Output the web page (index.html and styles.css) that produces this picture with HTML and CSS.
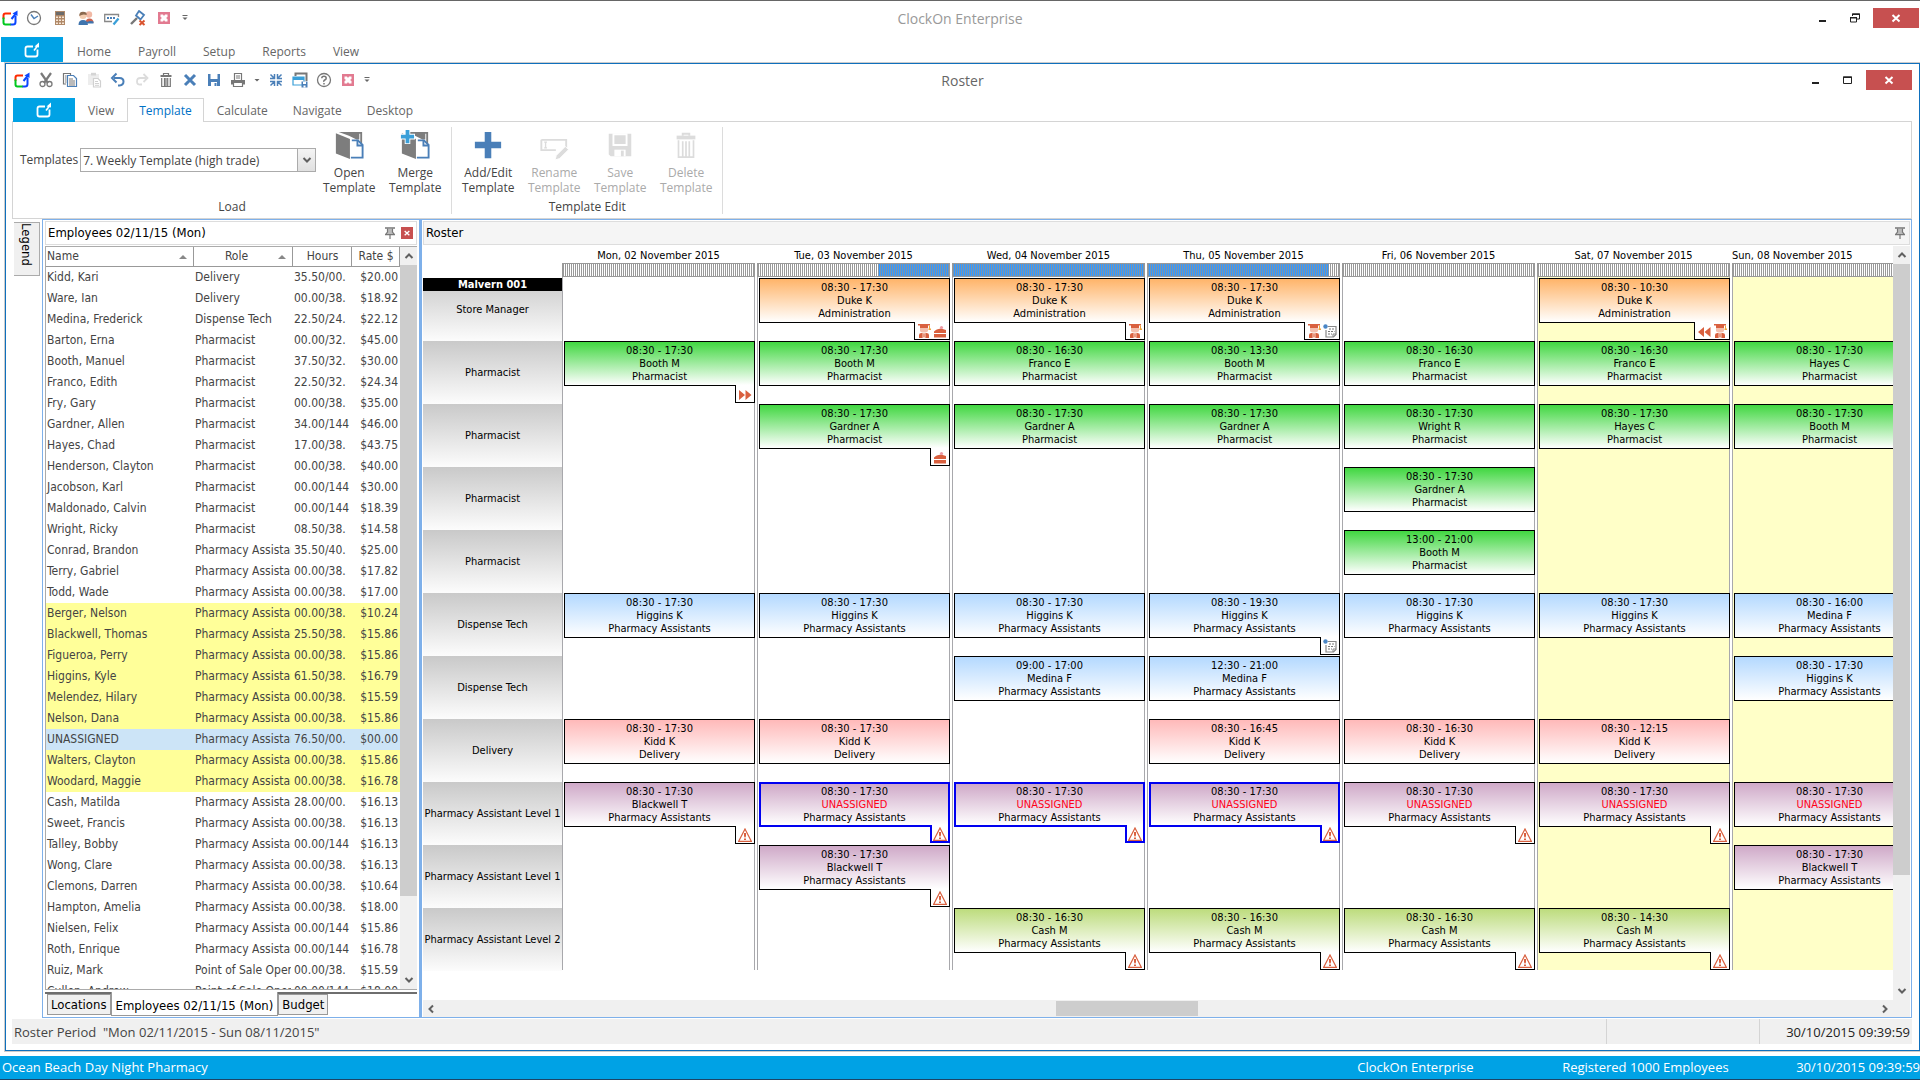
FILE: index.html
```
<!DOCTYPE html>
<html lang="en">
<head>
    <meta charset="UTF-8">
    <meta name="viewport" content="width=device-width, initial-scale=1.0">
    <title>ClockOn Enterprise</title>
    <link rel="stylesheet" href="styles.css">
</head>
<body>
    <!-- Icon set -->
    <svg class="icon-defs" aria-hidden="true">
        <symbol id="i-logo" viewBox="0 0 16 16">
            <path d="M1.5 9V5.5Q1.5 3.5 3.5 3.500H9" fill="none" stroke="#ff2a00" stroke-width="2"/>
            <path d="M1.500 7.500V12.500Q1.500 14.500 3.500 14.500H9" fill="none" stroke="#00c81e" stroke-width="2"/>
            <path d="M8.500 14.500H11Q13.500 14.500 13.500 12V6" fill="none" stroke="#0a46ff" stroke-width="2"/>
            <path d="M9.500 9 14 3.500" stroke="#0a46ff" stroke-width="2"/>
            <path d="M10.500 3.500 15.500 .5V6Z" fill="#0a46ff"/>
        </symbol>
        <symbol id="i-mark" viewBox="0 0 16 16">
            <path d="M9 4.500H3.500Q1.500 4.500 1.500 6.500V12.500Q1.500 14.500 3.500 14.500H11.500Q13.500 14.500 13.500 12.500V7.500" fill="none" stroke="#fff" stroke-width="1.800"/>
            <path d="M10 8.500 13.500 4" stroke="#fff" stroke-width="1.600"/>
            <path d="M10.500 4.500 15 .5V5.500Z" fill="#fff"/>
        </symbol>
        <symbol id="i-clock" viewBox="0 0 16 16">
            <circle cx="8" cy="8" r="6.500" fill="#fff" stroke="#777" stroke-width="1.300"/>
            <path d="M5 4.500 8 8.500 12 6" fill="none" stroke="#4a7fb8" stroke-width="1.400"/>
        </symbol>
        <symbol id="i-calc" viewBox="0 0 16 16">
            <path d="M3 1H13V15H3Z" fill="#b08968"/>
            <path d="M4 2H12V5H4Z" fill="#6b6b6b"/>
            <path d="M4 6.500H6V8H4ZM7 6.500H9V8H7ZM10 6.500H12V8H10ZM4 9.500H6V11H4ZM7 9.500H9V11H7ZM10 9.500H12V11H10ZM4 12.500H6V14H4ZM7 12.500H9V14H7ZM10 12.500H12V14H10Z" fill="#f6e6d6"/>
        </symbol>
        <symbol id="i-people" viewBox="0 0 16 16">
            <circle cx="11" cy="4.500" r="3.200" fill="#f1b9a5"/>
            <path d="M7.500 13Q7.500 8.500 11.500 8.500T15.500 13Z" fill="#c9614d"/>
            <circle cx="5" cy="5.500" r="3.500" fill="#f3cdb0"/>
            <path d="M1.300 6Q1 1.700 5 1.700T8.700 5Q5 3.500 1.300 6Z" fill="#8b6a4f"/>
            <path d="M.5 15Q.5 10 5 10T10 15Z" fill="#3f74ad"/>
            <path d="M9 13.500H15.500V11.500Q12 10.500 9 12Z" fill="#3f74ad"/>
        </symbol>
        <symbol id="i-card" viewBox="0 0 16 16">
            <path d="M14.500 7V4.500H.7V11.500H8" fill="none" stroke="#888" stroke-width="1.300"/>
            <path d="M3 7H5V9H3ZM6 7H8V9H6ZM9 7H11V9H9Z" fill="#4a7fb8"/>
            <path d="M9.500 14.500 14.500 8.500" stroke="#3a9fd8" stroke-width="2.200"/>
        </symbol>
        <symbol id="i-plug" viewBox="0 0 16 16">
            <path d="M1 14 7 8" stroke="#777" stroke-width="2.400"/>
            <path d="M9 1 14 5 10.500 9.500 6 5.500Z" fill="none" stroke="#4a7fb8" stroke-width="1.800"/>
            <path d="M9.500 10.500 14.500 15M14.500 10.500 9.500 15" stroke="#d9532f" stroke-width="2"/>
        </symbol>
        <symbol id="i-exit" viewBox="0 0 16 16">
            <path d="M2 2H14V14H2Z" fill="#e27a90"/>
            <path d="M4.500 4.500H7L8 6 9 4.500H11.500V7L10 8 11.500 9V11.500H9L8 10 7 11.500H4.500V9L6 8 4.500 7Z" fill="#fff"/>
        </symbol>
        <symbol id="i-cut" viewBox="0 0 16 16">
            <path d="M3 1 10 11M13 1 6 11" stroke="#7a7a7a" stroke-width="2.200"/>
            <circle cx="4.500" cy="12" r="2.500" fill="none" stroke="#7a7a7a" stroke-width="1.300"/>
            <circle cx="11.500" cy="12" r="2.500" fill="none" stroke="#7a7a7a" stroke-width="1.300"/>
        </symbol>
        <symbol id="i-copy" viewBox="0 0 16 16">
            <path d="M4 12H1.500V1.500H8.500V3" fill="none" stroke="#777" stroke-width="1.200"/>
            <path d="M5.500 3.500H11.500L14.500 6.500V14.500H5.500Z" fill="#fff" stroke="#4a7fb8" stroke-width="1.200"/>
            <path d="M7 7H11M7 9H13M7 11H13M7 13H13M3 4H4.500M3 6H4.500M3 8H4.500M3 10H4.500" stroke="#777"/>
        </symbol>
        <symbol id="i-paste" viewBox="0 0 16 16">
            <path d="M2 2H13V13H2Z" fill="#ededed"/>
            <path d="M5 .8H10V3.500H5Z" fill="#d5d5d5"/>
            <path d="M7.500 6.500H12L14.500 9V15H7.500Z" fill="#fff" stroke="#d0d0d0" stroke-width="1.200"/>
            <path d="M9 9.500H12M9 11.500H13M9 13.300H13" stroke="#d0d0d0"/>
        </symbol>
        <symbol id="i-undo" viewBox="0 0 16 16">
            <path d="M4 6H9.500Q13.500 6 13.500 9.500T9.500 13.500H8" fill="none" stroke="#4a7fb8" stroke-width="2"/>
            <path d="M6.500 1.500 2 6 6.500 10.500" fill="none" stroke="#4a7fb8" stroke-width="2"/>
        </symbol>
        <symbol id="i-redo" viewBox="0 0 16 16">
            <path d="M12 6H6.500Q3 6 3 9.500T6.500 12.500H8" fill="none" stroke="#dcdcdc" stroke-width="1.800"/>
            <path d="M9.500 2 13.500 6 9.500 10" fill="none" stroke="#dcdcdc" stroke-width="1.800"/>
        </symbol>
        <symbol id="i-trash" viewBox="0 0 16 16">
            <path d="M5.500 3V1.500H10.500V3" fill="none" stroke="#777" stroke-width="1.200"/>
            <path d="M2.500 3H13.500V5H2.500Z" fill="#777"/>
            <path d="M3.700 6V14.500H12.300V6M6.500 6V14M8 6V14M9.700 6V14" fill="none" stroke="#777" stroke-width="1.200"/>
        </symbol>
        <symbol id="i-delete" viewBox="0 0 16 16">
            <path d="M3 3 13 13M13 3 3 13" stroke="#4a7fb8" stroke-width="3"/>
        </symbol>
        <symbol id="i-save" viewBox="0 0 16 16">
            <path d="M2 2H14V14H2Z" fill="#4a7fb8"/>
            <path d="M4.500 2H11.500V7H4.500ZM5 10H11V14H5Z" fill="#fff"/>
            <path d="M8.500 11H10.500V14H8.500Z" fill="#4a7fb8"/>
        </symbol>
        <symbol id="i-print" viewBox="0 0 16 16">
            <path d="M4.500 8V1.500H11.500V8" fill="#fff" stroke="#777" stroke-width="1.200"/>
            <path d="M6 4H10M6 6H10" stroke="#777"/>
            <path d="M1 8H15V12.500H1Z" fill="#777"/>
            <path d="M3.500 10.500H12.500V14.500H3.500Z" fill="#fff" stroke="#777" stroke-width="1.200"/>
        </symbol>
        <symbol id="i-shrink" viewBox="0 0 16 16">
            <path d="M6.500 2V6.500H2M9.500 2V6.500H14M6.500 14V9.500H2M9.500 14V9.500H14M6.500 6.500 2.500 2.500M9.500 6.500 13.500 2.500M6.500 9.500 2.500 13.500M9.500 9.500 13.500 13.500" fill="none" stroke="#4a7fb8" stroke-width="1.500"/>
        </symbol>
        <symbol id="i-window" viewBox="0 0 16 16">
            <path d="M3.500 4V1.500H14.500V9" fill="none" stroke="#777" stroke-width="2"/>
            <path d="M1 5H12V13H1Z" fill="#fff" stroke="#3a9fd8" stroke-width="1.200"/>
            <path d="M1 5H12V8H1Z" fill="#3a9fd8"/>
            <path d="M9.500 9.500H15.500V15.500H9.500Z" fill="#4a7fb8"/>
            <path d="M11 9.500H14V12H11ZM11.500 13.500H13.500V15.500H11.500Z" fill="#fff"/>
        </symbol>
        <symbol id="i-help" viewBox="0 0 16 16">
            <circle cx="8" cy="8" r="6.500" fill="#fff" stroke="#777" stroke-width="1.300"/>
            <path d="M5.800 6.300Q5.800 4.200 8 4.200T10.200 6.200Q10.200 7.300 8.800 8T8 9.800M8 11V12.500" fill="none" stroke="#777" stroke-width="1.500"/>
        </symbol>
        <symbol id="i-more" viewBox="0 0 8 8">
            <path d="M1.500 1.500H6.500" stroke="#666"/>
            <path d="M1.500 3.500H6.500L4 6Z" fill="#666"/>
        </symbol>
        <symbol id="i-caret" viewBox="0 0 8 8">
            <path d="M1.500 3H6.500L4 5.500Z" fill="#666"/>
        </symbol>
        <symbol id="i-open" viewBox="0 0 32 32">
            <path d="M5 2H30V15H28V4H27V10H24L16 6Z" fill="#7d7d7d"/>
            <path d="M2 3.500 17 9.500V31L2 25Z" fill="#7d7d7d"/>
            <path d="M19 11H25.500L30.500 16V29.500H18" fill="#fff" stroke="#4a7fb8" stroke-width="2"/>
            <path d="M25 11V16.500H30.500" fill="none" stroke="#4a7fb8" stroke-width="2"/>
        </symbol>
        <symbol id="i-merge" viewBox="0 0 32 32">
            <use href="#i-open"/>
            <path d="M5-1H11V4H16V10H11V15H5V10H0V4H5Z" fill="#fff"/>
            <path d="M6 0H10V5H15V9H10V14H6V9H1V5H6Z" fill="#3a9fd8"/>
        </symbol>
        <symbol id="i-plus" viewBox="0 0 32 32">
            <path d="M12.500 2H19.500V12.500H30V19.500H19.500V30H12.500V19.500H2V12.500H12.500Z" fill="#4a7fb8"/>
        </symbol>
        <symbol id="i-rename" viewBox="0 0 32 32">
            <path d="M2.500 10.500H29V21M18 21.500H2.500V10.500" fill="none" stroke="#dcdcdc" stroke-width="2"/>
            <path d="M5.500 13H8.500M5.500 19H8.500M7 13V19" stroke="#dcdcdc" stroke-width="1.400"/>
            <path d="M17 32 18.500 27 28 17.500 31.500 21 22 30.500Z" fill="#dcdcdc" stroke="#fff"/>
        </symbol>
        <symbol id="i-disk" viewBox="0 0 32 32">
            <path d="M4 4H28V28H6L4 26Z" fill="#dcdcdc"/>
            <path d="M9 4.500H23V16H9Z" fill="#dcdcdc" stroke="#fff" stroke-width="2"/>
            <path d="M10 21H22V28H10Z" fill="#fff"/>
            <path d="M17 22H20V28H17Z" fill="#dcdcdc"/>
        </symbol>
        <symbol id="i-bin" viewBox="0 0 32 32">
            <path d="M12.500 6V4H19.500V6" fill="none" stroke="#dcdcdc" stroke-width="2"/>
            <path d="M6 6H26V10H6Z" fill="#dcdcdc"/>
            <path d="M8 11V29H24V11M12.500 12V28M16 12V28M19.500 12V28" fill="none" stroke="#dcdcdc" stroke-width="1.800"/>
        </symbol>
        <symbol id="i-pin" viewBox="0 0 12 12">
            <path d="M1 1H11M1 7.500H11" stroke="#777" stroke-width="1.400"/>
            <path d="M3 2H9V5L10 7H2L3 5Z" fill="#bbb"/>
            <path d="M3.500 1.500V5L2 7M8.500 1.500V5L10 7M6 7.500V12" fill="none" stroke="#777" stroke-width="1.200"/>
        </symbol>
        <symbol id="i-up" viewBox="0 0 10 10">
            <path d="M1.500 7 5 3.500 8.500 7" fill="none" stroke="#606060" stroke-width="2"/>
        </symbol>
        <symbol id="i-down" viewBox="0 0 10 10">
            <path d="M1.500 3 5 6.500 8.500 3" fill="none" stroke="#606060" stroke-width="2"/>
        </symbol>
        <symbol id="i-left" viewBox="0 0 10 10">
            <path d="M7 1.500 3.500 5 7 8.500" fill="none" stroke="#606060" stroke-width="2"/>
        </symbol>
        <symbol id="i-right" viewBox="0 0 10 10">
            <path d="M3 1.500 6.500 5 3 8.500" fill="none" stroke="#606060" stroke-width="2"/>
        </symbol>
        <symbol id="i-min" viewBox="0 0 12 12"><path d="M2 8H9V10H2Z" fill="#222"/></symbol>
        <symbol id="i-max" viewBox="0 0 12 12">
            <path d="M1.500 3H9.500V9.500H1.500Z" fill="none" stroke="#222"/>
            <path d="M1 2.500H10V4H1Z" fill="#222"/>
        </symbol>
        <symbol id="i-restore" viewBox="0 0 12 12">
            <path d="M3.500 4V2H10.500V7H8" fill="none" stroke="#222"/>
            <path d="M1.500 5.500H7.500V10H1.500Z" fill="#fff" stroke="#222"/>
            <path d="M3 1.500H11V3H3ZM1 5H8V6.500H1Z" fill="#222"/>
        </symbol>
        <symbol id="i-close" viewBox="0 0 12 12">
            <path d="M2.500 3 9.500 9.500M9.500 3 2.500 9.500" stroke="#fff" stroke-width="2"/>
        </symbol>
        <symbol id="i-grad" viewBox="0 0 14 14">
            <path d="M1 0H13V1.500H11V4H3V1.500H1Z" fill="#d9603f"/>
            <path d="M3 4H11V6.500Q11 8.500 7 8.500T3 6.500Z" fill="#f3bfae"/>
            <path d="M12 1.500H13V4.500H14V6H11.500V4.500H12Z" fill="#f0a63c"/>
            <path d="M2 14V11Q2 9 4.500 9H9.500Q12 9 12 11V14Z" fill="#d9603f"/>
            <path d="M5.500 9H8.500V14H5.500Z" fill="#f6d3c6"/>
            <path d="M6.500 9.500H7.500V13H6.500Z" fill="#d9603f"/>
        </symbol>
        <symbol id="i-cake" viewBox="0 0 14 14">
            <path d="M1 7.500Q3 5 8 4.500L13 6V9H1Z" fill="#d9603f"/>
            <circle cx="8.500" cy="3.500" r="1.600" fill="#eb9aa6"/>
            <path d="M1 10H13V13.500H1Z" fill="#d9603f"/>
        </symbol>
        <symbol id="i-note" viewBox="0 0 14 14">
            <path d="M5 2.500H13V10.500L10.500 13H3V6" fill="#fff" stroke="#888" stroke-width="1.200"/>
            <path d="M6 5H11.500M5 7.500H11.500M5 10H9" stroke="#777" stroke-dasharray="2 1"/>
            <path d="M10 13V10H13" fill="none" stroke="#888"/>
            <circle cx="2.500" cy="2.500" r="2.200" fill="#4a86c5"/>
        </symbol>
        <symbol id="i-warn" viewBox="0 0 14 14">
            <path d="M7 1 13.300 13.300H.7Z" fill="#fff" stroke="#d9603f" stroke-width="1.200"/>
            <path d="M6 5H8V8L7.500 9.500H6.500L6 8ZM6 10.500H8V12H6Z" fill="#d9603f"/>
        </symbol>
        <symbol id="i-next" viewBox="0 0 14 14">
            <path d="M1 3 7 8 1 13ZM7.500 3 13.500 8 7.500 13Z" fill="#d9603f"/>
        </symbol>
        <symbol id="i-prev" viewBox="0 0 14 14">
            <path d="M7 3 1 8 7 13ZM13.500 3 7.500 8 13.500 13Z" fill="#d9603f"/>
        </symbol>
    </svg>

    <div class="app">
        <!-- Main window -->
        <header class="titlebar">
            <div class="quick quick-main">
                <button aria-label="ClockOn"><svg><use href="#i-logo"/></svg></button>
                <button aria-label="Clock"><svg><use href="#i-clock"/></svg></button>
                <button aria-label="Calculator"><svg><use href="#i-calc"/></svg></button>
                <button aria-label="Employees"><svg><use href="#i-people"/></svg></button>
                <button aria-label="Timecards"><svg><use href="#i-card"/></svg></button>
                <button aria-label="Disconnect"><svg><use href="#i-plug"/></svg></button>
                <button aria-label="Exit"><svg><use href="#i-exit"/></svg></button>
                <button class="tiny" aria-label="Customise"><svg><use href="#i-more"/></svg></button>
            </div>
            <h1 class="title muted">ClockOn Enterprise</h1>
            <div class="window-buttons">
                <button aria-label="Minimise"><svg><use href="#i-min"/></svg></button>
                <button aria-label="Restore"><svg><use href="#i-restore"/></svg></button>
                <button class="close" aria-label="Close"><svg><use href="#i-close"/></svg></button>
            </div>
        </header>
        <nav class="tabs tabs-main">
            <button class="file-tab" aria-label="Application menu"><svg><use href="#i-mark"/></svg></button>
            <button class="tab">Home</button>
            <button class="tab">Payroll</button>
            <button class="tab">Setup</button>
            <button class="tab">Reports</button>
            <button class="tab">View</button>
        </nav>

        <!-- Roster window -->
        <main class="window">
            <div class="titlebar titlebar-inner">
                <div class="quick">
                    <button aria-label="ClockOn"><svg><use href="#i-logo"/></svg></button>
                    <button aria-label="Cut"><svg><use href="#i-cut"/></svg></button>
                    <button aria-label="Copy"><svg><use href="#i-copy"/></svg></button>
                    <button aria-label="Paste"><svg><use href="#i-paste"/></svg></button>
                    <button aria-label="Undo"><svg><use href="#i-undo"/></svg></button>
                    <button aria-label="Redo"><svg><use href="#i-redo"/></svg></button>
                    <button aria-label="Clear"><svg><use href="#i-trash"/></svg></button>
                    <button aria-label="Delete"><svg><use href="#i-delete"/></svg></button>
                    <button aria-label="Save"><svg><use href="#i-save"/></svg></button>
                    <button aria-label="Print"><svg><use href="#i-print"/></svg></button>
                    <button class="tiny" aria-label="Print options"><svg><use href="#i-caret"/></svg></button>
                    <button aria-label="Fit"><svg><use href="#i-shrink"/></svg></button>
                    <button aria-label="Save layout"><svg><use href="#i-window"/></svg></button>
                    <button aria-label="Help"><svg><use href="#i-help"/></svg></button>
                    <button aria-label="Exit"><svg><use href="#i-exit"/></svg></button>
                    <button class="tiny" aria-label="Customise"><svg><use href="#i-more"/></svg></button>
                </div>
                <h2 class="title">Roster</h2>
                <div class="window-buttons">
                    <button aria-label="Minimise"><svg><use href="#i-min"/></svg></button>
                    <button aria-label="Maximise"><svg><use href="#i-max"/></svg></button>
                    <button class="close" aria-label="Close"><svg><use href="#i-close"/></svg></button>
                </div>
            </div>
            <nav class="tabs tabs-inner">
                <button class="file-tab" aria-label="Roster menu"><svg><use href="#i-mark"/></svg></button>
                <button class="tab">View</button>
                <button class="tab active">Template</button>
                <button class="tab">Calculate</button>
                <button class="tab">Navigate</button>
                <button class="tab">Desktop</button>
            </nav>

            <!-- Ribbon -->
            <section class="ribbon">
                <div class="group">
                    <div class="group-body">
                        <label for="template">Templates</label>
                        <div class="combo">
                            <select id="template">
                                <option>7. Weekly Template (high trade)</option>
                            </select>
                            <span class="combo-arrow"><svg><use href="#i-down"/></svg></span>
                        </div>
                        <button class="big"><svg><use href="#i-open"/></svg>Open<br>Template</button>
                        <button class="big"><svg><use href="#i-merge"/></svg>Merge<br>Template</button>
                    </div>
                    <div class="group-name">Load</div>
                </div>
                <div class="group">
                    <div class="group-body">
                        <button class="big"><svg><use href="#i-plus"/></svg>Add/Edit<br>Template</button>
                        <button class="big" disabled><svg><use href="#i-rename"/></svg>Rename<br>Template</button>
                        <button class="big" disabled><svg><use href="#i-disk"/></svg>Save<br>Template</button>
                        <button class="big" disabled><svg><use href="#i-bin"/></svg>Delete<br>Template</button>
                    </div>
                    <div class="group-name">Template Edit</div>
                </div>
            </section>

            <div class="dock">
                <div class="dock-side">
                    <button class="legend">Legend</button>
                </div>

                <!-- Employees -->
                <section class="panel employees">
                    <div class="panel-title">
                        <h3>Employees 02/11/15 (Mon)</h3>
                        <button class="pin" aria-label="Pin"><svg><use href="#i-pin"/></svg></button>
                        <button class="panel-close" aria-label="Close panel"><svg><use href="#i-close"/></svg></button>
                    </div>
                    <div class="list">
                        <div class="list-view">
                            <table>
                                <thead>
                                    <tr>
                                        <th class="col-name sorted">Name</th>
                                        <th class="col-role sorted">Role</th>
                                        <th class="col-hours">Hours</th>
                                        <th class="col-rate">Rate $</th>
                                    </tr>
                                </thead>
                                <tbody id="employees"></tbody>
                            </table>
                        </div>
                        <div class="scroll-v">
                            <svg><use href="#i-up"/></svg>
                            <div class="thumb"></div>
                            <svg><use href="#i-down"/></svg>
                        </div>
                    </div>
                    <div class="panel-tabs">
                        <button>Locations</button>
                        <button class="active">Employees 02/11/15 (Mon)</button>
                        <button>Budget</button>
                    </div>
                </section>

                <!-- Roster grid -->
                <section class="panel roster">
                    <div class="panel-title">
                        <h3>Roster</h3>
                        <button class="pin" aria-label="Pin"><svg><use href="#i-pin"/></svg></button>
                    </div>
                    <div class="roster-body">
                        <div class="roster-view">
                            <div class="roles" id="roles"></div>
                            <div class="days" id="days"></div>
                        </div>
                        <div class="scroll-v">
                            <svg><use href="#i-up"/></svg>
                            <div class="thumb"></div>
                            <svg><use href="#i-down"/></svg>
                        </div>
                    </div>
                    <div class="scroll-h">
                        <svg><use href="#i-left"/></svg>
                        <div class="track"><div class="thumb"></div></div>
                        <svg><use href="#i-right"/></svg>
                    </div>
                </section>
            </div>

            <div class="status">
                <span class="status-period">Roster Period&nbsp; "Mon 02/11/2015 - Sun 08/11/2015"</span>
                <span class="status-cell"></span>
                <span class="status-cell status-time">30/10/2015 09:39:59</span>
            </div>
        </main>

        <footer class="footer">
            <span class="footer-site">Ocean Beach Day Night Pharmacy</span>
            <span class="footer-app">ClockOn Enterprise</span>
            <span class="footer-licence">Registered 1000 Employees</span>
            <span class="footer-time">30/10/2015 09:39:59</span>
        </footer>
    </div>

    <script src="app.js"></script>
</body>
</html>
```

FILE: styles.css
```
* {
    margin: 0;
    padding: 0;
    box-sizing: border-box;
}

body {
    font-family: "Open Sans", "Noto Sans", sans-serif;
    font-size: 12px;
    line-height: 15px;
    color: #444;
    background: white;
}

button {
    font: inherit;
    color: inherit;
    background: none;
    border: none;
}

h1, h2, h3 {
    font-weight: normal;
}

.icon-defs {
    position: absolute;
    width: 0;
    height: 0;
}

.app {
    display: flex;
    flex-direction: column;
    height: 100vh;
    overflow: hidden;
    border-top: 1px solid #666;
}

/* Title bars */
.titlebar {
    display: grid;
    grid-template-columns: 1fr auto 1fr;
    flex: none;
    align-items: center;
    height: 36px;
    padding-bottom: 2px;
}

.titlebar-inner {
    height: 34px;
}

.titlebar .title {
    font-size: 14px;
    color: #666;
}

.titlebar .title.muted {
    color: #999;
}

.quick {
    display: flex;
    align-items: center;
    padding-left: 4px;
}

.quick button {
    display: flex;
    align-items: center;
    justify-content: center;
    width: 24px;
    height: 20px;
}

.quick svg {
    width: 16px;
    height: 16px;
}

.quick .tiny {
    width: 14px;
}

.quick .tiny svg {
    width: 8px;
    height: 8px;
}

.quick-main {
    gap: 2px;
    padding-left: 0;
}

.quick-main button:first-child {
    width: 20px;
}

.window-buttons {
    display: flex;
    justify-content: flex-end;
    padding-right: 1px;
}

.titlebar-inner .window-buttons {
    padding-right: 7px;
}

.window-buttons button {
    display: flex;
    align-items: center;
    justify-content: center;
    width: 32px;
    height: 20px;
}

.window-buttons svg {
    width: 12px;
    height: 12px;
}

.window-buttons .close {
    width: 46px;
    margin-left: 2px;
    background: #c75050;
}

/* Tabs */
.tabs {
    display: flex;
    flex: none;
    gap: 1px;
    height: 25px;
    padding-left: 1px;
}

.tabs-main {
    gap: 2px;
}

.tabs-main .tab {
    padding: 2px 12px 0 11px;
}

.tabs-inner {
    position: relative;
    z-index: 1;
    height: 24px;
    margin-bottom: -1px;
    padding-left: 7px;
}

.file-tab {
    width: 62px;
    background: #00a2e5;
}

.file-tab svg {
    width: 16px;
    height: 16px;
    vertical-align: middle;
}

.tab {
    padding: 0 11px;
    color: #666;
    border: 1px solid transparent;
    border-bottom: none;
}

.tab.active {
    color: #0072c6;
    background: white;
    border-color: #d4d4d4;
}

/* Roster window */
.window {
    display: flex;
    flex: 1;
    flex-direction: column;
    min-height: 0;
    margin: 1px 0 5px 5px;
    padding-bottom: 6px;
    border: 1px solid #0f70bd;
    outline: 1px solid #ccc;
}

.ribbon {
    display: flex;
    flex: none;
    height: 98px;
    margin: 0 7px 0 6px;
    padding: 5px 0 4px;
    border: 1px solid #d4d4d4;
}

.group {
    display: flex;
    flex-direction: column;
    border-right: 1px solid #dcdcdc;
}

.group-body {
    display: flex;
    flex: 1;
    align-items: flex-start;
    padding: 0 3px;
}

.group:first-child .group-body {
    padding: 0 3px 0 7px;
}

.group-body label {
    padding-top: 25px;
    padding-right: 2px;
}

.group-name {
    text-align: center;
    line-height: 14px;
}

.combo {
    display: flex;
    width: 236px;
    height: 24px;
    margin-top: 21px;
    border: 1px solid #ababab;
}

.combo select {
    flex: 1;
    min-width: 0;
    padding-left: 2px;
    font: inherit;
    color: inherit;
    background: white;
    border: none;
    appearance: none;
}

.combo-arrow {
    display: flex;
    align-items: center;
    justify-content: center;
    width: 18px;
    background: linear-gradient(#f4f4f4, #e0e0e0);
    border-left: 1px solid #ababab;
}

.combo-arrow svg {
    width: 10px;
    height: 10px;
}

.big {
    width: 66px;
    text-align: center;
}

.big svg {
    display: block;
    width: 30px;
    height: 30px;
    margin: 3px auto 5px;
    overflow: visible;
}

.big:disabled {
    color: #aaa;
}

/* Dock */
.dock {
    display: flex;
    flex: 1;
    min-height: 0;
    margin-right: 7px;
}

.dock-side {
    width: 36px;
    padding: 3px 2px 0 8px;
}

.legend {
    width: 26px;
    height: 54px;
    padding: 0 2px;
    font: 13px/22px "DejaVu Sans Condensed", "DejaVu Sans", sans-serif;
    color: black;
    background: #f0f0f0;
    border: 1px solid #ababab;
    border-left: none;
    text-align: left;
    writing-mode: vertical-rl;
}

.panel {
    display: flex;
    flex-direction: column;
    min-width: 0;
    padding: 1px 2px 0;
    border: 1px solid #7eb0ea;
}

.panel-title {
    display: flex;
    flex: none;
    align-items: center;
    height: 24px;
    padding: 0 3px 0 2px;
    color: black;
    border: 1px solid #ddd;
}

.panel-title h3 {
    flex: 1;
    font: 13px/16px "DejaVu Sans Condensed", "DejaVu Sans", sans-serif;
}

.pin svg {
    display: block;
    width: 12px;
    height: 12px;
}

.panel-close {
    display: flex;
    align-items: center;
    justify-content: center;
    width: 12px;
    height: 12px;
    margin-left: 5px;
    background: #c75050;
}

.panel-close svg {
    width: 8px;
    height: 8px;
}

.scroll-v {
    display: flex;
    flex: none;
    flex-direction: column;
    align-items: center;
    width: 17px;
    background: #f0f0f0;
}

.scroll-v svg,
.scroll-h svg {
    flex: none;
    width: 10px;
    height: 10px;
    margin: 4px 3px;
}

.scroll-v .thumb {
    width: 100%;
    height: 85%;
    margin-bottom: auto;
    background: #cdcdcd;
}

.roster .scroll-v .thumb {
    height: 81%;
}

/* Employees */
.employees {
    width: 378px;
}

.list {
    display: flex;
    flex: 1;
    min-height: 0;
    margin-top: 1px;
    border: 1px solid #ababab;
    border-right: none;
}

.list-view {
    flex: 1;
    overflow: hidden;
}

table {
    width: 100%;
    table-layout: fixed;
    border-spacing: 0;
    font: 12px/21px "DejaVu Sans Condensed", "DejaVu Sans", sans-serif;
}

th, td {
    height: 21px;
    padding: 0 0 0 1px;
    overflow: hidden;
    font-weight: normal;
    text-align: left;
    white-space: nowrap;
}

/* Transparent edge keeps clipped text away from the next column */
td {
    border-right: 2px solid transparent;
}

th {
    height: 20px;
    line-height: 19px;
    text-align: center;
    border-right: 1px solid #999;
    border-bottom: 1px solid #999;
}

.col-name {
    width: 148px;
    text-align: left;
}

.col-role {
    width: 99px;
}

.col-hours {
    width: 59px;
}

th.sorted::after {
    content: "";
    float: right;
    margin: 8px 6px 0 0;
    border: 4px solid transparent;
    border-top: none;
    border-bottom: 4px solid #888;
}

td:last-child {
    text-align: right;
}

tr.casual {
    background: #ffff99;
}

tr.selected {
    background: #cce4f7;
}

.panel-tabs {
    display: flex;
    flex: none;
    align-items: flex-start;
    height: 25px;
    margin-top: 2px;
    padding-left: 2px;
    font: 13px/18px "DejaVu Sans Condensed", "DejaVu Sans", sans-serif;
    color: black;
    border-top: 2px solid #6e6e6e;
}

.panel-tabs button {
    height: 21px;
    padding: 0 3px;
    background: #f0f0f0;
    border: 1px solid #999;
}

.panel-tabs .active {
    height: 24px;
    margin-top: -2px;
    padding: 4px 4px 0;
    background: white;
    border-top: none;
}

/* Roster grid */
.roster {
    flex: 1;
    padding: 1px 1px 0;
    border-left-width: 2px;
}

.roster .panel-title {
    background: #f5f5f5;
}

.roster-body {
    display: flex;
    flex: 1;
    min-height: 0;
    margin-top: 1px;
}

.roster-view {
    display: flex;
    flex: 1;
    overflow: hidden;
    font: 11px/13px "DejaVu Sans Condensed", "DejaVu Sans", sans-serif;
    color: black;
    text-align: center;
}

.roles {
    flex: none;
    width: 139px;
    padding-top: 32px;
}

.role {
    position: relative;
    display: flex;
    align-items: center;
    justify-content: center;
    height: 63px;
    white-space: nowrap;
    background: linear-gradient(#c9c9c9, #fcfcfc);
}

.location {
    position: absolute;
    top: 0;
    left: 0;
    width: 100%;
    font-weight: bold;
    color: white;
    background: black;
}

.days {
    display: flex;
    gap: 2px;
}

.day {
    flex: none;
    width: 193px;
}

.day-name {
    height: 17px;
    padding-top: 3px;
    white-space: nowrap;
}

.day:last-child .day-name {
    width: 119px;
}

.hours {
    height: 14px;
    background: repeating-linear-gradient(90deg, #999 0 1px, white 1px 2px);
    border: 1px solid #999;
}

.hours-on {
    height: 100%;
    background: repeating-linear-gradient(90deg, #8094a8 0 1px, #3399ff 1px 2px);
}

.slots {
    padding: 1px 0 0 1px;
    border: 1px solid #a8a8ac;
    border-width: 0 1px;
}

.day.weekend .slots {
    background: #ffffc8;
}

.slot {
    height: 63px;
}

.slot:last-child {
    height: 62px;
}

.shift {
    position: relative;
    height: 45px;
    margin-right: -1px;
    padding-top: 2px;
    border: 1px solid black;
}

.shift.administration { background: linear-gradient(#ffb469, white); }
.shift.pharmacist { background: linear-gradient(#41d741, white); }
.shift.dispense { background: linear-gradient(#b4d9ff, white); }
.shift.delivery { background: linear-gradient(#ffb9b9, white); }
.shift.assistant { background: linear-gradient(#cfa9c8, white); }
.shift.senior { background: linear-gradient(#bddc7d, white); }

.shift.selected {
    padding-top: 1px;
    border: 2px solid #0000f0;
}

.unassigned {
    color: #ff0018;
}

/* Flags hang off the bottom right corner of a shift */
.flags {
    position: absolute;
    top: 100%;
    right: -1px;
    display: flex;
    gap: 2px;
    height: 18px;
    padding: 2px 2px 0;
    background: white;
    border: 1px solid black;
    border-top: none;
}

.selected .flags {
    right: -2px;
    padding: 2px 1px 0;
    border-width: 0 2px 2px;
    border-color: #0000f0;
}

.flags svg {
    width: 14px;
    height: 14px;
}

.scroll-h {
    display: flex;
    flex: none;
    align-items: center;
    height: 17px;
    padding-right: 17px;
    background: #f0f0f0;
}

.scroll-h .track {
    flex: 1;
    height: 15px;
    padding-left: 42%;
}

.scroll-h .thumb {
    width: 142px;
    height: 100%;
    background: #cdcdcd;
}

/* Status bars */
.status {
    display: flex;
    flex: none;
    height: 25px;
    margin: 1px 7px 0 6px;
    font-size: 13px;
    line-height: 27px;
    background: #f0f0f0;
}

.status-period {
    flex: 1;
    padding-left: 2px;
}

.status-cell {
    width: 153px;
    border-left: 1px solid #d4d4d4;
}

.status-time {
    padding-right: 2px;
    color: #222;
    text-align: right;
}

.footer {
    display: flex;
    flex: none;
    height: 24px;
    font-size: 13px;
    line-height: 23px;
    color: white;
    background: #00a2e5;
    border-bottom: 1px solid #1d4466;
}

.footer-site {
    flex: 1;
    padding-left: 2px;
}

.footer-app {
    width: 205px;
}

.footer-licence {
    width: 234px;
}
```

FILE: app.js
```
// name, role, hours, rate, row class
const employees = [
    ['Kidd, Kari', 'Delivery', '35.50/00.', '$20.00'],
    ['Ware, Ian', 'Delivery', '00.00/38.', '$18.92'],
    ['Medina, Frederick', 'Dispense Tech', '22.50/24.', '$22.12'],
    ['Barton, Erna', 'Pharmacist', '00.00/32.', '$45.00'],
    ['Booth, Manuel', 'Pharmacist', '37.50/32.', '$30.00'],
    ['Franco, Edith', 'Pharmacist', '22.50/32.', '$24.34'],
    ['Fry, Gary', 'Pharmacist', '00.00/38.', '$35.00'],
    ['Gardner, Allen', 'Pharmacist', '34.00/144', '$46.00'],
    ['Hayes, Chad', 'Pharmacist', '17.00/38.', '$43.75'],
    ['Henderson, Clayton', 'Pharmacist', '00.00/38.', '$40.00'],
    ['Jacobson, Karl', 'Pharmacist', '00.00/144', '$30.00'],
    ['Maldonado, Calvin', 'Pharmacist', '00.00/144', '$18.39'],
    ['Wright, Ricky', 'Pharmacist', '08.50/38.', '$14.58'],
    ['Conrad, Brandon', 'Pharmacy Assistant', '35.50/40.', '$25.00'],
    ['Terry, Gabriel', 'Pharmacy Assistant', '00.00/38.', '$17.82'],
    ['Todd, Wade', 'Pharmacy Assistant', '00.00/38.', '$17.00'],
    ['Berger, Nelson', 'Pharmacy Assistant', '00.00/38.', '$10.24', 'casual'],
    ['Blackwell, Thomas', 'Pharmacy Assistant', '25.50/38.', '$15.86', 'casual'],
    ['Figueroa, Perry', 'Pharmacy Assistant', '00.00/38.', '$15.86', 'casual'],
    ['Higgins, Kyle', 'Pharmacy Assistant', '61.50/38.', '$16.79', 'casual'],
    ['Melendez, Hilary', 'Pharmacy Assistant', '00.00/38.', '$15.59', 'casual'],
    ['Nelson, Dana', 'Pharmacy Assistant', '00.00/38.', '$15.86', 'casual'],
    ['UNASSIGNED', 'Pharmacy Assistant', '76.50/00.', '$00.00', 'selected'],
    ['Walters, Clayton', 'Pharmacy Assistant', '00.00/38.', '$15.86', 'casual'],
    ['Woodard, Maggie', 'Pharmacy Assistant', '00.00/38.', '$16.78', 'casual'],
    ['Cash, Matilda', 'Pharmacy Assistant', '28.00/00.', '$16.13'],
    ['Sweet, Francis', 'Pharmacy Assistant', '00.00/38.', '$16.13'],
    ['Talley, Bobby', 'Pharmacy Assistant', '00.00/144', '$16.13'],
    ['Wong, Clare', 'Pharmacy Assistant', '00.00/38.', '$16.13'],
    ['Clemons, Darren', 'Pharmacy Assistant', '00.00/38.', '$10.64'],
    ['Hampton, Amelia', 'Pharmacy Assistant', '00.00/38.', '$18.00'],
    ['Nielsen, Felix', 'Pharmacy Assistant', '00.00/144', '$15.86'],
    ['Roth, Enrique', 'Pharmacy Assistant', '00.00/144', '$16.78'],
    ['Ruiz, Mark', 'Point of Sale Operator', '00.00/38.', '$15.59'],
    ['Cullen, Andrew', 'Point of Sale Operator', '00.00/144', '$18.00']
];

const roles = [
    'Store Manager', 'Pharmacist', 'Pharmacist', 'Pharmacist', 'Pharmacist',
    'Dispense Tech', 'Dispense Tech', 'Delivery',
    'Pharmacy Assistant Level 1', 'Pharmacy Assistant Level 1', 'Pharmacy Assistant Level 2'
];

// colour class and department shown on the shifts of each role row
const kinds = [
    ['administration', 'Administration'],
    ['pharmacist', 'Pharmacist'],
    ['pharmacist', 'Pharmacist'],
    ['pharmacist', 'Pharmacist'],
    ['pharmacist', 'Pharmacist'],
    ['dispense', 'Pharmacy Assistants'],
    ['dispense', 'Pharmacy Assistants'],
    ['delivery', 'Delivery'],
    ['assistant', 'Pharmacy Assistants'],
    ['assistant', 'Pharmacy Assistants'],
    ['senior', 'Pharmacy Assistants']
];

// shifts: role row -> [time, employee, flags, selected]
const days = [
    { name: 'Mon, 02 November 2015', shifts: {
        1: ['08:30 - 17:30', 'Booth M', ['next']],
        5: ['08:30 - 17:30', 'Higgins K'],
        7: ['08:30 - 17:30', 'Kidd K'],
        8: ['08:30 - 17:30', 'Blackwell T', ['warn']]
    } },
    { name: 'Tue, 03 November 2015', from: 63, to: 100, shifts: {
        0: ['08:30 - 17:30', 'Duke K', ['grad', 'cake']],
        1: ['08:30 - 17:30', 'Booth M'],
        2: ['08:30 - 17:30', 'Gardner A', ['cake']],
        5: ['08:30 - 17:30', 'Higgins K'],
        7: ['08:30 - 17:30', 'Kidd K'],
        8: ['08:30 - 17:30', 'UNASSIGNED', ['warn'], true],
        9: ['08:30 - 17:30', 'Blackwell T', ['warn']]
    } },
    { name: 'Wed, 04 November 2015', from: 0, to: 100, shifts: {
        0: ['08:30 - 17:30', 'Duke K', ['grad']],
        1: ['08:30 - 16:30', 'Franco E'],
        2: ['08:30 - 17:30', 'Gardner A'],
        5: ['08:30 - 17:30', 'Higgins K'],
        6: ['09:00 - 17:00', 'Medina F'],
        8: ['08:30 - 17:30', 'UNASSIGNED', ['warn'], true],
        10: ['08:30 - 16:30', 'Cash M', ['warn']]
    } },
    { name: 'Thu, 05 November 2015', from: 0, to: 95, shifts: {
        0: ['08:30 - 17:30', 'Duke K', ['grad', 'note']],
        1: ['08:30 - 13:30', 'Booth M'],
        2: ['08:30 - 17:30', 'Gardner A'],
        5: ['08:30 - 19:30', 'Higgins K', ['note']],
        6: ['12:30 - 21:00', 'Medina F'],
        7: ['08:30 - 16:45', 'Kidd K'],
        8: ['08:30 - 17:30', 'UNASSIGNED', ['warn'], true],
        10: ['08:30 - 16:30', 'Cash M', ['warn']]
    } },
    { name: 'Fri, 06 November 2015', shifts: {
        1: ['08:30 - 16:30', 'Franco E'],
        2: ['08:30 - 17:30', 'Wright R'],
        3: ['08:30 - 17:30', 'Gardner A'],
        4: ['13:00 - 21:00', 'Booth M'],
        5: ['08:30 - 17:30', 'Higgins K'],
        7: ['08:30 - 16:30', 'Kidd K'],
        8: ['08:30 - 17:30', 'UNASSIGNED', ['warn']],
        10: ['08:30 - 16:30', 'Cash M', ['warn']]
    } },
    { name: 'Sat, 07 November 2015', weekend: true, shifts: {
        0: ['08:30 - 10:30', 'Duke K', ['prev', 'grad']],
        1: ['08:30 - 16:30', 'Franco E'],
        2: ['08:30 - 17:30', 'Hayes C'],
        5: ['08:30 - 17:30', 'Higgins K'],
        7: ['08:30 - 12:15', 'Kidd K'],
        8: ['08:30 - 17:30', 'UNASSIGNED', ['warn']],
        10: ['08:30 - 14:30', 'Cash M', ['warn']]
    } },
    { name: 'Sun, 08 November 2015', weekend: true, shifts: {
        1: ['08:30 - 17:30', 'Hayes C'],
        2: ['08:30 - 17:30', 'Booth M'],
        5: ['08:30 - 16:00', 'Medina F'],
        6: ['08:30 - 17:30', 'Higgins K'],
        8: ['08:30 - 17:30', 'UNASSIGNED'],
        9: ['08:30 - 17:30', 'Blackwell T']
    } }
];

function shiftHtml(row, shift) {
    if (!shift) return '';
    const [time, who, flags, selected] = shift;
    const [kind, department] = kinds[row];
    const icons = (flags || []).map(f => `<svg><use href="#i-${f}"/></svg>`).join('');
    return `
        <div class="shift ${kind}${selected ? ' selected' : ''}">
            <div>${time}</div>
            <div${who === 'UNASSIGNED' ? ' class="unassigned"' : ''}>${who}</div>
            <div>${department}</div>
            ${icons ? `<div class="flags">${icons}</div>` : ''}
        </div>
    `;
}

function dayHtml(day) {
    const width = (day.to || 0) - (day.from || 0);
    const bar = width ? `<div class="hours-on" style="margin-left: ${day.from}%; width: ${width}%"></div>` : '';
    return `
        <div class="day${day.weekend ? ' weekend' : ''}">
            <div class="day-name">${day.name}</div>
            <div class="hours">${bar}</div>
            <div class="slots">
                ${roles.map((role, row) => `<div class="slot">${shiftHtml(row, day.shifts[row])}</div>`).join('')}
            </div>
        </div>
    `;
}

document.getElementById('employees').innerHTML = employees.map(([name, role, hours, rate, cls]) => `
    <tr class="${cls || ''}"><td>${name}</td><td>${role}</td><td>${hours}</td><td>${rate}</td></tr>
`).join('');

document.getElementById('roles').innerHTML = roles.map((role, row) => `
    <div class="role">${row === 0 ? '<div class="location">Malvern 001</div>' : ''}${role}</div>
`).join('');

document.getElementById('days').innerHTML = days.map(dayHtml).join('');
```
